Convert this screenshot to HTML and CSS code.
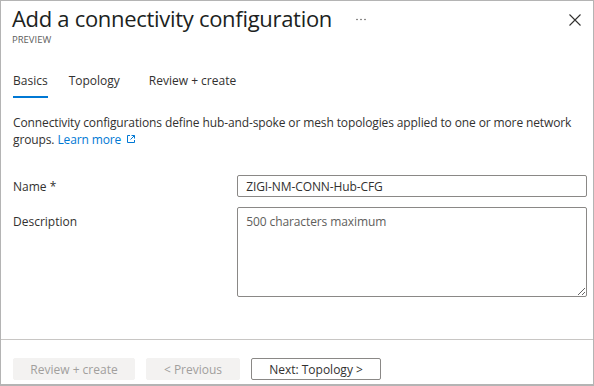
FILE: index.html
```html
<!DOCTYPE html>
<html lang="en">
<head>
    <meta charset="UTF-8">
    <title>Add a connectivity configuration</title>
    <link rel="stylesheet" href="styles.css">
</head>
<body>
    <div class="blade">
        <div class="header">
            <div class="titles">
                <h1>Add a connectivity configuration</h1>
                <div class="subtitle">PREVIEW</div>
            </div>
            <svg class="more" width="10" height="3" viewBox="0 0 10 3">
                <circle cx="1" cy="1.5" r="0.8" fill="#605e5c"/>
                <circle cx="5" cy="1.5" r="0.8" fill="#605e5c"/>
                <circle cx="9" cy="1.5" r="0.8" fill="#605e5c"/>
            </svg>
            <svg class="close" width="12" height="12" viewBox="0 0 12 12">
                <path d="M0.5 0.5 L11.5 11.5 M11.5 0.5 L0.5 11.5" stroke="#323130" stroke-width="1.1" fill="none"/>
            </svg>
        </div>

        <div class="tabs">
            <span class="tab active">Basics</span>
            <span class="tab">Topology</span>
            <span class="tab">Review + create</span>
        </div>

        <div class="content">
            <p class="intro">
                <span>Connectivity configurations define hub-and-spoke or mesh topologies applied to one or more network</span>
                <span>groups.</span> <a href="#">Learn more</a><svg class="ext" width="10" height="10" viewBox="0 0 10 10">
                    <path d="M4 1.5 H1.5 V8.5 H8.5 V6 M5.5 1.5 H8.5 V4.5 M8.5 1.5 L4.5 5.5" stroke="#0078d4" stroke-width="1" fill="none"/>
                </svg>
            </p>

            <div class="row name-row">
                <label class="label">Name <span class="req">*</span></label>
                <input class="field" type="text" value="ZIGI-NM-CONN-Hub-CFG">
            </div>
            <div class="row desc-row">
                <label class="label">Description</label>
                <textarea class="field area" placeholder="500 characters maximum"></textarea>
            </div>
        </div>

        <div class="footer">
            <button class="btn disabled">Review + create</button>
            <button class="btn disabled prev">&lt; Previous</button>
            <button class="btn next">Next: Topology &gt;</button>
        </div>
    </div>
</body>
</html>
```

FILE: styles.css
```css
body {
    margin: 0;
    font-family: 'Open Sans', 'Noto Sans', sans-serif;
    color: #323130;
    background: #fff;
}

.blade {
    width: 594px;
    height: 386px;
    box-sizing: border-box;
    border: 1px solid #b4b4b4;
    border-bottom-width: 2px;
    display: flex;
    flex-direction: column;
}

.header {
    display: flex;
    align-items: flex-start;
    padding: 2px 12px 0 11px;
}

h1 {
    margin: 0;
    font-size: 22px;
    font-weight: 400;
    line-height: 30px;
    color: #201f1e;
    letter-spacing: -0.3px;
}

.subtitle {
    font-size: 9.5px;
    color: #605e5c;
    line-height: 12px;
    margin-top: 1px;
}

.more {
    margin: 15px 0 0 24px;
}

.close {
    margin: 11px 0 0 auto;
}

.tabs {
    display: flex;
    padding: 26px 12px 0;
    font-size: 12px;
}

.tab {
    margin-right: 21px;
    padding-bottom: 7px;
    border-bottom: 2px solid transparent;
}

.tab + .tab + .tab {
    margin-left: 8px;
}

.tab.active {
    border-bottom-color: #0078d4;
}

.content {
    flex: 1;
    padding: 0 6px 0 12px;
    font-size: 12px;
}

.intro {
    margin: 16px 0 0;
    line-height: 17px;
    letter-spacing: -0.12px;
}

.intro a {
    color: #0078d4;
    text-decoration: none;
}

.ext {
    margin-left: 5px;
}

.row {
    display: flex;
}

.name-row {
    align-items: center;
    margin-top: 27px;
}

.desc-row {
    align-items: flex-start;
    margin-top: 10px;
}

.label {
    width: 225px;
}

.desc-row .label {
    margin-top: 6px;
}

.req {
    color: #323130;
}

.field {
    width: 351px;
    height: 22px;
    box-sizing: border-box;
    border: 1px solid #8a8886;
    border-radius: 2px;
    padding: 0 8px;
    font-family: inherit;
    font-size: 12px;
    color: #323130;
    letter-spacing: -0.1px;
}

.area {
    height: 90px;
    padding: 5px 8px;
    resize: both;
}

.area::placeholder {
    color: #605e5c;
}

.footer {
    border-top: 1px solid #c8c6c4;
    padding: 18px 12px 4px;
    display: flex;
    gap: 11px;
}

.btn {
    height: 22px;
    box-sizing: border-box;
    font-family: inherit;
    font-size: 12px;
    border-radius: 2px;
    padding: 0;
}

.btn.disabled {
    width: 122px;
    background: #f3f2f1;
    border: 1px solid #f3f2f1;
    color: #a19f9d;
}

.btn.prev {
    width: 94px;
}

.btn.next {
    width: 130px;
    background: #fff;
    border: 1px solid #8a8886;
    color: #323130;
}
```
